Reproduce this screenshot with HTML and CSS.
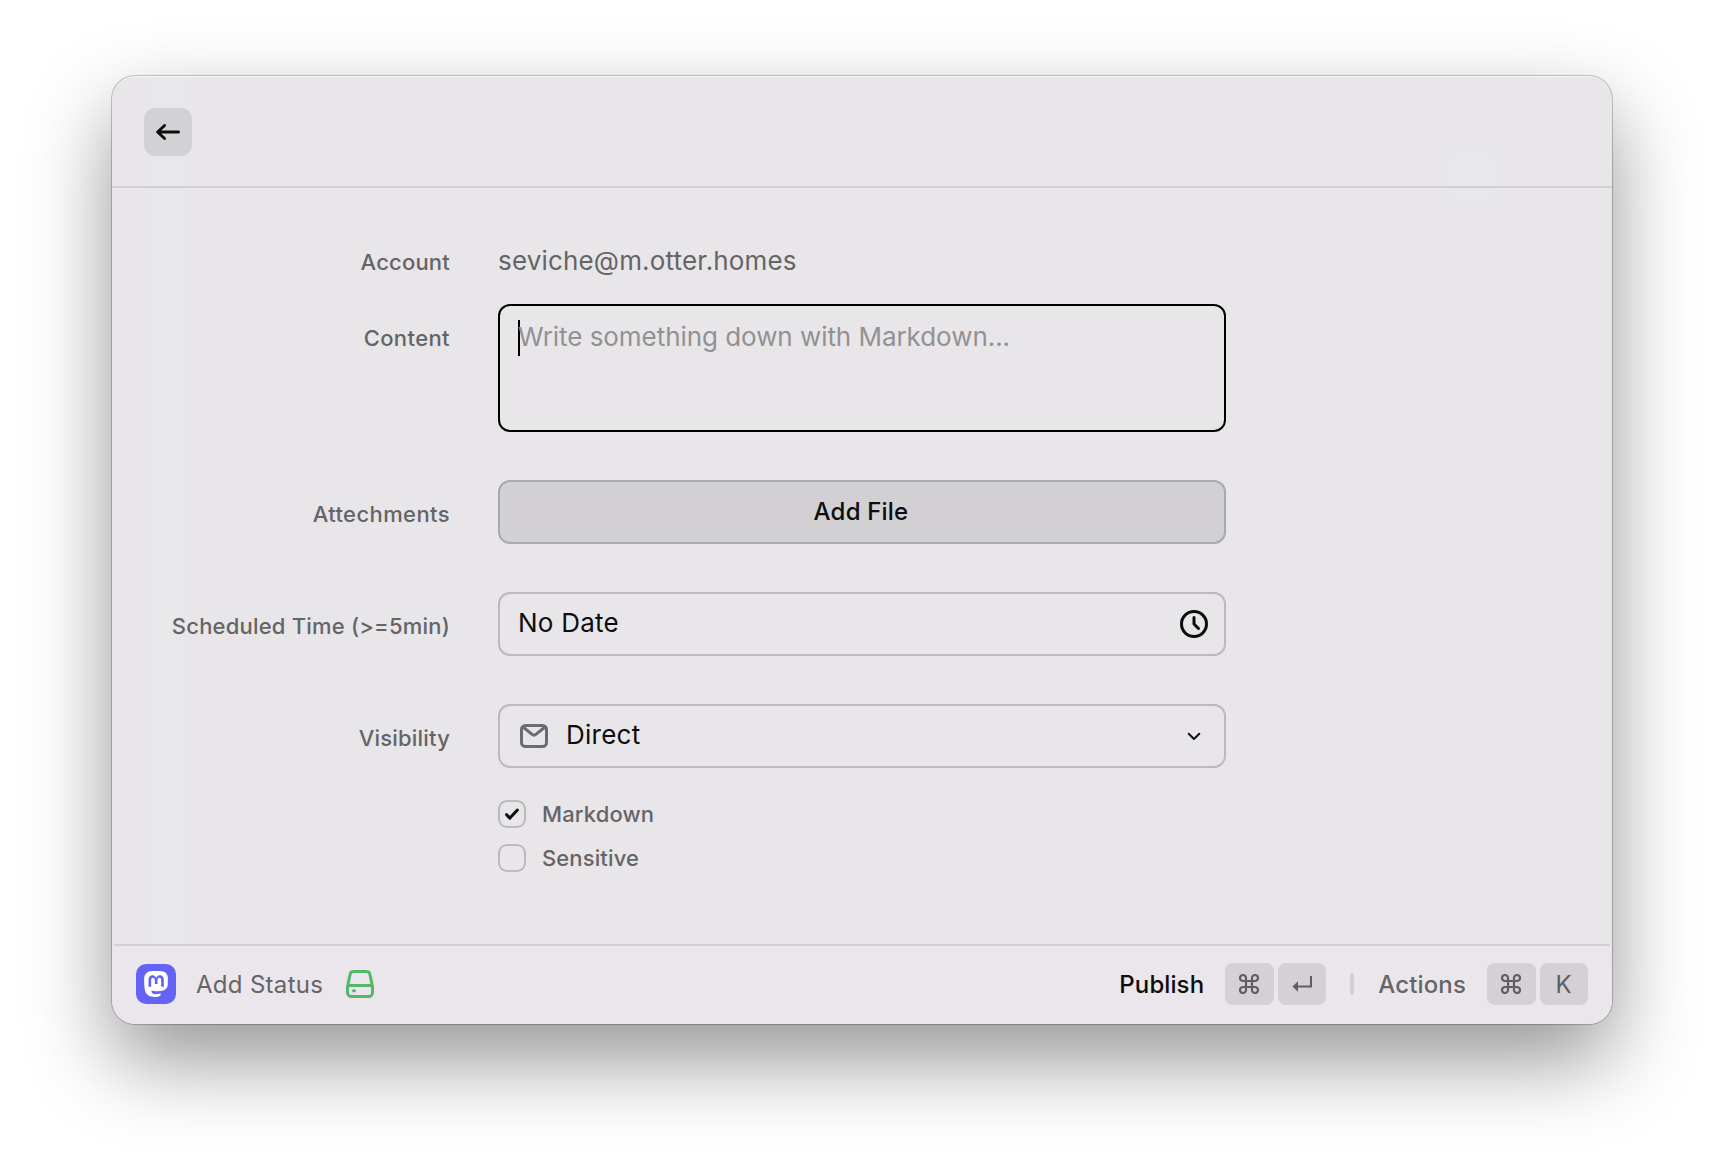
FILE: index.html
```html
<!DOCTYPE html>
<html lang="en">
<head>
<meta charset="utf-8">
<title>Add Status</title>
<link rel="stylesheet" href="styles.css">
</head>
<body>
<main class="window">
  <header class="header">
    <button class="back" aria-label="Back">
      <svg width="24" height="16" viewBox="0 0 24 16" fill="none" stroke="currentColor" stroke-width="2.8" stroke-linecap="round" stroke-linejoin="round"><path d="M22.6 8H2M8.6 1.4 1.6 8l7 6.600"/></svg>
    </button>
  </header>
  <form class="form">
    <div class="row row-account"><span class="label tight">Account</span><span class="account">seviche@m.otter.homes</span></div>
    <div class="row row-content"><span class="label">Content</span><div class="field textarea"><span class="caret"></span><span class="placeholder">Write something down with Markdown...</span></div></div>
    <div class="row"><span class="label">Attechments</span><div class="field file">Add File</div></div>
    <div class="row"><span class="label tight">Scheduled Time (&gt;=5min)</span>
      <div class="field date"><span class="value">No Date</span>
        <svg width="28" height="28" viewBox="0 0 28 28" fill="none" stroke="currentColor" stroke-width="3" stroke-linecap="round" stroke-linejoin="round"><circle cx="14" cy="14" r="12.5"/><path d="M14 7.500V14l4.500 4.500"/></svg>
      </div></div>
    <div class="row row-visibility"><span class="label tight">Visibility</span>
      <div class="field select">
        <svg class="mail" width="28" height="24" viewBox="0 0 28 24" fill="none" stroke="currentColor" stroke-width="3" stroke-linecap="round" stroke-linejoin="round"><rect x="1.500" y="1.500" width="25" height="21" rx="4"/><path d="m3 3 8.800 7.200a3.500 3.500 0 0 0 4.400 0L25 3"/></svg>
        <span class="value">Direct</span>
        <svg class="chevron" width="14" height="9" viewBox="0 0 14 9" fill="none" stroke="currentColor" stroke-width="2" stroke-linecap="round" stroke-linejoin="round"><path d="m1.700 1.800 5.300 5.200 5.300-5.200"/></svg>
      </div></div>
    <div class="check"><span class="box"><svg width="16" height="12" viewBox="0 0 16 12" fill="none" stroke="currentColor" stroke-width="3" stroke-linecap="round" stroke-linejoin="round"><path d="m2.500 6.600 3.400 3.500L13.400 2"/></svg></span>Markdown</div>
    <div class="check"><span class="box"></span>Sensitive</div>
  </form>
  <footer class="footer">
    <span class="logo">
      <svg width="24" height="26" viewBox="0.5 0 23 24" preserveAspectRatio="none" fill="currentColor"><path d="M23.268 5.313c-.35-2.578-2.617-4.610-5.304-5.004C17.510.242 15.792 0 11.813 0h-.030c-3.980 0-4.835.242-5.288.309C3.882.692 1.496 2.518.917 5.127.640 6.412.610 7.837.661 9.143c.074 1.874.088 3.745.260 5.611.118 1.240.325 2.470.620 3.680.550 2.237 2.777 4.098 4.960 4.857 2.336.792 4.849.923 7.256.380.265-.061.527-.132.786-.213.585-.184 1.270-.390 1.774-.753a.057.057 0 0 0 .023-.043v-1.809a.052.052 0 0 0-.020-.041.053.053 0 0 0-.046-.010 20.282 20.282 0 0 1-4.709.545c-2.730 0-3.463-1.284-3.674-1.818a5.593 5.593 0 0 1-.319-1.433.053.053 0 0 1 .066-.054c1.517.363 3.072.546 4.632.546.376 0 .750 0 1.125-.010 1.570-.044 3.224-.124 4.768-.422.038-.008.077-.015.110-.024 2.435-.464 4.753-1.920 4.989-5.604.008-.145.030-1.520.030-1.670.002-.512.167-3.630-.024-5.545zm-3.748 9.195h-2.561V8.290c0-1.309-.550-1.976-1.670-1.976-1.230 0-1.846.790-1.846 2.350v3.403h-2.546V8.663c0-1.560-.617-2.350-1.848-2.350-1.112 0-1.668.668-1.670 1.977v6.218H4.822V8.102c0-1.310.337-2.350 1.011-3.120.696-.770 1.608-1.164 2.740-1.164 1.311 0 2.302.500 2.962 1.498l.638 1.060.638-1.060c.660-.999 1.650-1.498 2.960-1.498 1.130 0 2.043.395 2.740 1.164.675.770 1.012 1.810 1.012 3.120z"/></svg>
    </span>
    <span class="title">Add Status</span>
    <svg class="drive" width="28" height="28" viewBox="0 0 28 28" fill="none" stroke="currentColor" stroke-width="3" stroke-linecap="round" stroke-linejoin="round"><path d="M1.500 17 4 4.500a3.600 3.600 0 0 1 3.500-3h13a3.600 3.600 0 0 1 3.500 3L26.500 17v5.500a4 4 0 0 1-4 4h-17a4 4 0 0 1-4-4zM2 15.500h24"/><path d="M7.500 20.700h1"/></svg>
    <span class="publish">Publish</span>
    <kbd class="key"><svg width="20" height="20" viewBox="0 0 20 20" fill="none" stroke="currentColor" stroke-width="2.2"><path id="cmd" d="M7 7V4.100A3 3 0 1 0 4.100 7h11.800A3 3 0 1 0 13 4.100v11.800a3 3 0 1 0 2.900-2.900H4.100A3 3 0 1 0 7 15.900z"/></svg></kbd>
    <kbd class="key enter"><svg width="20" height="16" viewBox="0 0 20 16" fill="none" stroke="currentColor" stroke-width="2"><path d="M19 0v10.500H4"/><path d="M6 5.200.500 10.500l5.500 5.300z" fill="currentColor" stroke="none"/></svg></kbd>
    <span class="divider"></span>
    <span class="actions">Actions</span>
    <kbd class="key"><svg width="20" height="20" viewBox="0 0 20 20" fill="none" stroke="currentColor" stroke-width="2.2"><use href="#cmd"/></svg></kbd>
    <kbd class="key">K</kbd>
  </footer>
</main>
</body>
</html>
```
FILE: styles.css
```css
* { box-sizing: border-box; }
body {
  margin: 0;
  height: 1172px;
  padding: 76px 112px 0;
  overflow: hidden;
  background: #fff;
  font-family: Inter, "Liberation Sans", sans-serif;
  color: #0d0d0e;
}
.window {
  width: 1500px;
  height: 948px;
  display: flex;
  flex-direction: column;
  border-radius: 23px;
  background:
    radial-gradient(circle 30px at 1360px 99px, #e8e8ea 92%, transparent),
    linear-gradient(90deg, transparent 32px, #e8e8ea 34px, #e8e8ea 76px, transparent 78px),
    #e8e6e9;
  overflow: hidden;
  box-shadow: inset 0 2px 1px -1px rgba(255,255,255,.8), 0 0 0 1px rgba(0,0,0,.18), 0 0 2px rgba(0,0,0,.12), 0 36px 84px rgba(0,0,0,.42);
}
.header {
  height: 112px;
  padding: 32px;
  border-bottom: 2px solid #d2d0d3;
}
.back {
  display: flex;
  align-items: center;
  justify-content: center;
  width: 48px;
  height: 48px;
  padding: 0;
  border: 0;
  border-radius: 11px;
  background: #d2d1d3;
  color: #0d0d0e;
}
.form { flex: 1; padding-top: 52px; }
.row {
  display: grid;
  grid-template-columns: 338px 728px;
  column-gap: 48px;
  height: 64px;
  margin-bottom: 48px;
}
.row-account { height: 44px; margin-bottom: 20px; }
.row-content { height: 128px; }
.row-visibility { margin-bottom: 32px; }
.label {
  height: 64px;
  padding-top: 2px;
  line-height: 64px;
  text-align: right;
  font-size: 22px;
  font-weight: 500;
  letter-spacing: .4px;
  color: #656466;
  white-space: nowrap;
}
.tight { letter-spacing: .2px; }
.row-account .label { height: 44px; padding-top: 0; line-height: 44px; }
.account { line-height: 42px; font-size: 26px; letter-spacing: .17px; color: #656466; }
.field {
  display: flex;
  align-items: center;
  border: 2px solid #bbb9bc;
  border-radius: 12px;
  padding: 0 16px 0 18px;
  font-size: 26px;
}
.value { line-height: 56px; padding-bottom: 2px; letter-spacing: .25px; }
.textarea { align-items: flex-start; padding-top: 14px; border-color: #000; }
.caret { width: 2px; height: 36px; margin-right: -2px; background: #000; }
.placeholder { line-height: 34px; letter-spacing: -.05px; color: #929193; }
.file {
  justify-content: center;
  padding: 0 2px 1px 0;
  background: #d2d0d3;
  border-color: #a9a8aa;
  font-size: 24px;
  font-weight: 500;
  letter-spacing: .2px;
}
.date { justify-content: space-between; }
.mail { margin: 0 18px 0 2px; color: #6c6b6d; }
.chevron { margin: 0 7px 0 auto; }
.check {
  display: flex;
  align-items: center;
  gap: 16px;
  height: 28px;
  margin: 0 0 16px 386px;
  font-size: 22px;
  font-weight: 500;
  letter-spacing: .12px;
  color: #656466;
}
.box {
  display: flex;
  align-items: center;
  justify-content: center;
  width: 28px;
  height: 28px;
  border: 2px solid #bbb9bc;
  border-radius: 9px;
  color: #0d0d0e;
}
.footer {
  display: flex;
  align-items: center;
  height: 80px;
  padding: 0 24px;
  background: linear-gradient(#d2d0d3, #d2d0d3) center top / calc(100% - 4px) 2px no-repeat, #eae6eb;
  font-size: 24px;
}
.logo {
  display: flex;
  align-items: center;
  justify-content: center;
  width: 40px;
  height: 40px;
  border-radius: 10px;
  background: #6364f6;
  color: #fff;
}
.title { margin-left: 20px; letter-spacing: .3px; color: #656466; }
.drive { margin-left: 23px; color: #52b86b; }
.publish { margin-left: auto; font-weight: 500; letter-spacing: .1px; }
.key {
  display: flex;
  align-items: center;
  justify-content: center;
  width: 49px;
  height: 42px;
  margin-left: 21px;
  padding-right: 1px;
  border-radius: 8px;
  background: #d4d0d5;
  color: #5f5e60;
  font: 24px Inter, sans-serif;
}
.key + .key { width: 48px; margin-left: 4px; }
.divider { width: 4px; height: 22px; margin: 0 24px; border-radius: 2px; background: #d4d0d5; }
.actions { font-weight: 500; letter-spacing: .15px; color: #656466; }
```
